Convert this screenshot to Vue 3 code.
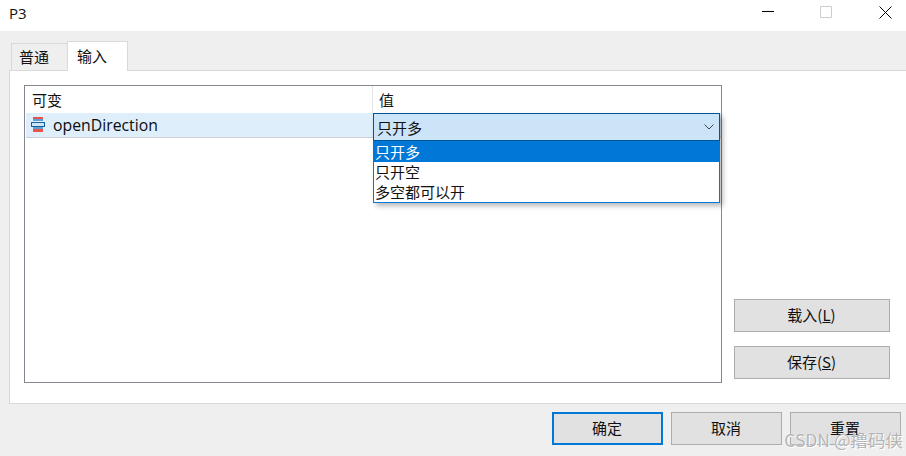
<script setup>
const options = ['只开多', '只开空', '多空都可以开']
</script>

<template>
  <div class="dialog">
    <header class="titlebar">
      <span class="title">P3</span>
      <div class="winctl">
        <svg width="13" height="13" viewBox="0 0 13 13"><path d="M0 5.500h12" stroke="#000" fill="none"/></svg>
        <svg width="13" height="13" viewBox="0 0 13 13"><path d="M.5.500h11v11H.5z" stroke="#ccc" fill="none"/></svg>
        <svg class="close" width="13" height="13" viewBox="0 0 13 13"><path d="M.5.500l12 12M12.500.500l-12 12" stroke="#000" fill="none"/></svg>
      </div>
    </header>
    <main class="body">
      <div class="tabs">
        <div class="tab">普通</div>
        <div class="tab active">输入</div>
      </div>
      <section class="panel">
        <div class="table">
          <div class="thead">
            <div class="col1">可变</div>
            <div class="col2">值</div>
          </div>
          <div class="row">
            <svg class="vicon" width="14" height="16" viewBox="0 0 14 16">
              <rect x="2" y="0" width="10" height="2" fill="#e8534f"/>
              <rect x="2" y="2" width="10" height="2" fill="#5f9fd4"/>
              <rect x=".5" y="5.500" width="13" height="4" fill="#cfe4f6" stroke="#12609f"/>
              <rect x="2" y="10" width="10" height="2" fill="#5f9fd4"/>
              <rect x="2" y="12" width="10" height="3" fill="#e8534f"/>
            </svg>
            <span class="vname">openDirection</span>
          </div>
          <div class="combo">
            <div class="combo-box">
              <span>只开多</span>
              <svg width="10" height="6" viewBox="0 0 10 6"><path d="M.5.500L5 5 9.500.500" stroke="#444" fill="none"/></svg>
            </div>
            <ul class="menu">
              <li v-for="(o, i) in options" :key="o" :class="{ sel: i === 0 }">{{ o }}</li>
            </ul>
          </div>
        </div>
        <aside class="side">
          <button class="btn">载入(<u>L</u>)</button>
          <button class="btn">保存(<u>S</u>)</button>
        </aside>
      </section>
      <footer class="foot">
        <button class="btn wide primary">确定</button>
        <button class="btn wide">取消</button>
        <button class="btn wide">重置</button>
      </footer>
    </main>
    <div class="mark">CSDN @撸码侠</div>
  </div>
</template>

<style scoped>
.dialog {
  position: relative;
  width: 906px;
  height: 456px;
  overflow: hidden;
  display: flex;
  flex-direction: column;
  background: #fff;
  font-family: "Noto Sans CJK SC", "Noto Sans", sans-serif;
  font-size: 15px;
  color: #111;
}
.titlebar {
  height: 31px;
  flex: none;
  display: flex;
  align-items: center;
  justify-content: space-between;
  padding-left: 9px;
}
.title { font-size: 15px; font-family: "Open Sans", sans-serif; margin-top: -5px; }
.winctl {
  display: flex;
  gap: 45px;
  padding-right: 14px;
  margin-top: -6px;
}
.winctl svg { display: block; }
.winctl .close { margin-left: 1px; }
.body {
  flex: 1;
  background: #efefef;
  display: flex;
  flex-direction: column;
  padding-left: 9px;
  min-height: 0;
}
.tabs {
  height: 39px;
  flex: none;
  display: flex;
  align-items: flex-end;
  padding: 0 0 0 2px;
  position: relative;
  z-index: 1;
}
.tab {
  width: 56px;
  height: 27px;
  box-sizing: border-box;
  border: 1px solid #d9d9d9;
  border-bottom: 0;
  border-right: 0;
  padding-right: 11px;
  text-align: center;
  line-height: 26px;
}
.tab.active {
  width: 61px;
  height: 30px;
  background: #fff;
  border-right: 1px solid #d9d9d9;
  line-height: 27px;
  margin-bottom: -1px;
  padding-right: 11px;
}
.panel {
  flex: none;
  height: 334px;
  box-sizing: border-box;
  background: #fff;
  border: 1px solid #d9d9d9;
  border-right: 0;
  padding: 14px 16px 20px 14px;
  display: flex;
  justify-content: space-between;
}
.table {
  position: relative;
  width: 698px;
  box-sizing: border-box;
  border: 1px solid #83878f;
}
.thead {
  display: flex;
  height: 27px;
  line-height: 28px;
}
.col1 {
  width: 348px;
  box-sizing: border-box;
  padding-left: 7px;
  border-right: 1px solid #e4e4e4;
}
.col2 { padding-left: 6px; flex: 1; }
.row {
  margin-left: 1px;
  height: 25px;
  box-sizing: border-box;
  background: #deeefb;
  border-bottom: 1px solid #cfcfd2;
  display: flex;
  align-items: center;
  padding-left: 5px;
  gap: 8px;
}
.vicon { flex: none; }
.vname { font-family: "Open Sans", sans-serif; font-size: 15.800px; color: #0c0c0c; }
.combo {
  position: absolute;
  left: 348px;
  top: 27px;
  width: 347px;
  box-shadow: 3px 3px 5px rgba(0, 0, 0, .28);
}
.combo-box {
  height: 28px;
  box-sizing: border-box;
  background: #cce4f7;
  border: 1px solid #005499;
  display: flex;
  align-items: center;
  justify-content: space-between;
  padding: 0 5px 0 3px;
}
.menu {
  list-style: none;
  margin: 0;
  padding: 0;
  background: #fff;
  border: 1px solid #0078d7;
  border-top: 0;
}
.menu li {
  height: 20px;
  line-height: 20px;
  padding-left: 1px;
}
.menu li.sel { background: #0078d7; color: #fff; height: 21px; line-height: 21px; }
.side {
  width: 156px;
  display: flex;
  flex-direction: column;
  justify-content: flex-end;
  gap: 14px;
  padding-bottom: 4px;
}
.btn {
  height: 33px;
  width: 156px;
  box-sizing: border-box;
  background: #e1e1e1;
  border: 1px solid #adadad;
  font: inherit;
  color: #111;
  padding: 0 1px 2px 0;
}
.foot {
  flex: 1;
  display: flex;
  justify-content: flex-end;
  gap: 8px;
  padding: 8px 5px 0 0;
}
.btn.wide { width: 111px; }
.btn.primary { border: 2px solid #0078d7; }
.mark {
  position: absolute;
  right: 3px;
  bottom: 3px;
  font-size: 17.500px;
  line-height: 26px;
  color: #b4b4b4;
  text-shadow: 0 0 1px #fff, 1px 1px 0 #fff;
  font-family: "Noto Sans CJK SC", sans-serif;
}
</style>
